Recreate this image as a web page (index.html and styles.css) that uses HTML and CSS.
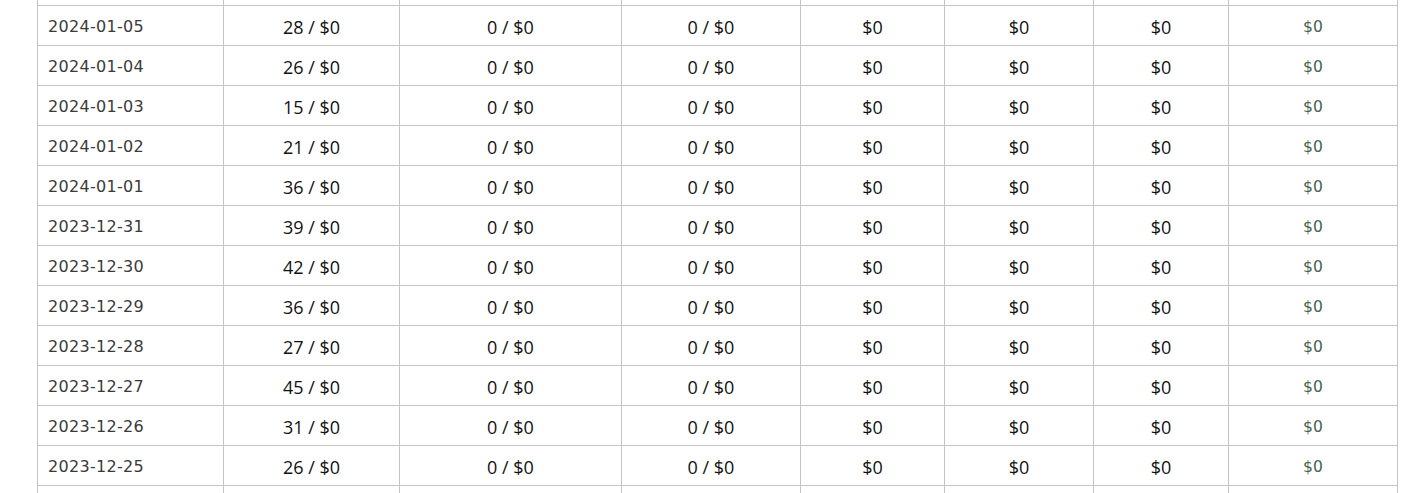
FILE: index.html
```html
<!DOCTYPE html>
<html>
<head>
<meta charset="utf-8">
<link rel="stylesheet" href="styles.css">
</head>
<body>
<div class="viewport">
<table class="stats">
<colgroup>
<col class="c1"><col class="c2"><col class="c3"><col class="c4"><col class="c5"><col class="c6"><col class="c7"><col class="c8">
</colgroup>
<tbody>
<tr class="stub-top"><td></td><td></td><td></td><td></td><td></td><td></td><td></td><td></td></tr>
<tr><td class="date">2024-01-05</td><td>28 / $0</td><td>0 / $0</td><td>0 / $0</td><td>$0</td><td>$0</td><td>$0</td><td class="total">$0</td></tr>
<tr><td class="date">2024-01-04</td><td>26 / $0</td><td>0 / $0</td><td>0 / $0</td><td>$0</td><td>$0</td><td>$0</td><td class="total">$0</td></tr>
<tr><td class="date">2024-01-03</td><td>15 / $0</td><td>0 / $0</td><td>0 / $0</td><td>$0</td><td>$0</td><td>$0</td><td class="total">$0</td></tr>
<tr><td class="date">2024-01-02</td><td>21 / $0</td><td>0 / $0</td><td>0 / $0</td><td>$0</td><td>$0</td><td>$0</td><td class="total">$0</td></tr>
<tr><td class="date">2024-01-01</td><td>36 / $0</td><td>0 / $0</td><td>0 / $0</td><td>$0</td><td>$0</td><td>$0</td><td class="total">$0</td></tr>
<tr><td class="date">2023-12-31</td><td>39 / $0</td><td>0 / $0</td><td>0 / $0</td><td>$0</td><td>$0</td><td>$0</td><td class="total">$0</td></tr>
<tr><td class="date">2023-12-30</td><td>42 / $0</td><td>0 / $0</td><td>0 / $0</td><td>$0</td><td>$0</td><td>$0</td><td class="total">$0</td></tr>
<tr><td class="date">2023-12-29</td><td>36 / $0</td><td>0 / $0</td><td>0 / $0</td><td>$0</td><td>$0</td><td>$0</td><td class="total">$0</td></tr>
<tr><td class="date">2023-12-28</td><td>27 / $0</td><td>0 / $0</td><td>0 / $0</td><td>$0</td><td>$0</td><td>$0</td><td class="total">$0</td></tr>
<tr><td class="date">2023-12-27</td><td>45 / $0</td><td>0 / $0</td><td>0 / $0</td><td>$0</td><td>$0</td><td>$0</td><td class="total">$0</td></tr>
<tr><td class="date">2023-12-26</td><td>31 / $0</td><td>0 / $0</td><td>0 / $0</td><td>$0</td><td>$0</td><td>$0</td><td class="total">$0</td></tr>
<tr><td class="date">2023-12-25</td><td>26 / $0</td><td>0 / $0</td><td>0 / $0</td><td>$0</td><td>$0</td><td>$0</td><td class="total">$0</td></tr>
<tr class="stub-bottom"><td></td><td></td><td></td><td></td><td></td><td></td><td></td><td></td></tr>
</tbody>
</table>
</div>
</body>
</html>
```

FILE: styles.css
```css
html, body {
  margin: 0;
  padding: 0;
  background: #ffffff;
  overflow: hidden;
}

.viewport {
  height: 493px;
  overflow: hidden;
  padding-left: 37px;
}

.stats {
  border-collapse: collapse;
  table-layout: fixed;
  width: 1361px;
}

.c1 { width: 186px; }
.c2 { width: 176px; }
.c3 { width: 222px; }
.c4 { width: 179px; }
.c5 { width: 144px; }
.c6 { width: 149px; }
.c7 { width: 135px; }
.c8 { width: 169px; }

.stats tr {
  height: 40px;
}

.stats tr.stub-top {
  height: 5px;
}

.stats tr.stub-top td {
  border-top: 0;
  padding: 0;
  height: 5px;
}

.stats tr.stub-bottom {
  height: 20px;
}

.stats td {
  border: 1px solid #c4c4c4;
  padding: 2px 10px 0;
  text-align: center;
  vertical-align: middle;
  font-family: "Open Sans", "Noto Sans", sans-serif;
  font-size: 18px;
  font-weight: 500;
  color: #121212;
  white-space: nowrap;
}

.stats td.date {
  text-align: left;
  font-family: "DejaVu Sans", Verdana, sans-serif;
  font-size: 16px;
  font-weight: 400;
  letter-spacing: 0.3px;
  color: #3a3a3a;
}

.stats td.total {
  font-family: "DejaVu Sans", Verdana, sans-serif;
  font-size: 15.5px;
  font-weight: 400;
  letter-spacing: 0.2px;
  color: #45634f;
}
```
